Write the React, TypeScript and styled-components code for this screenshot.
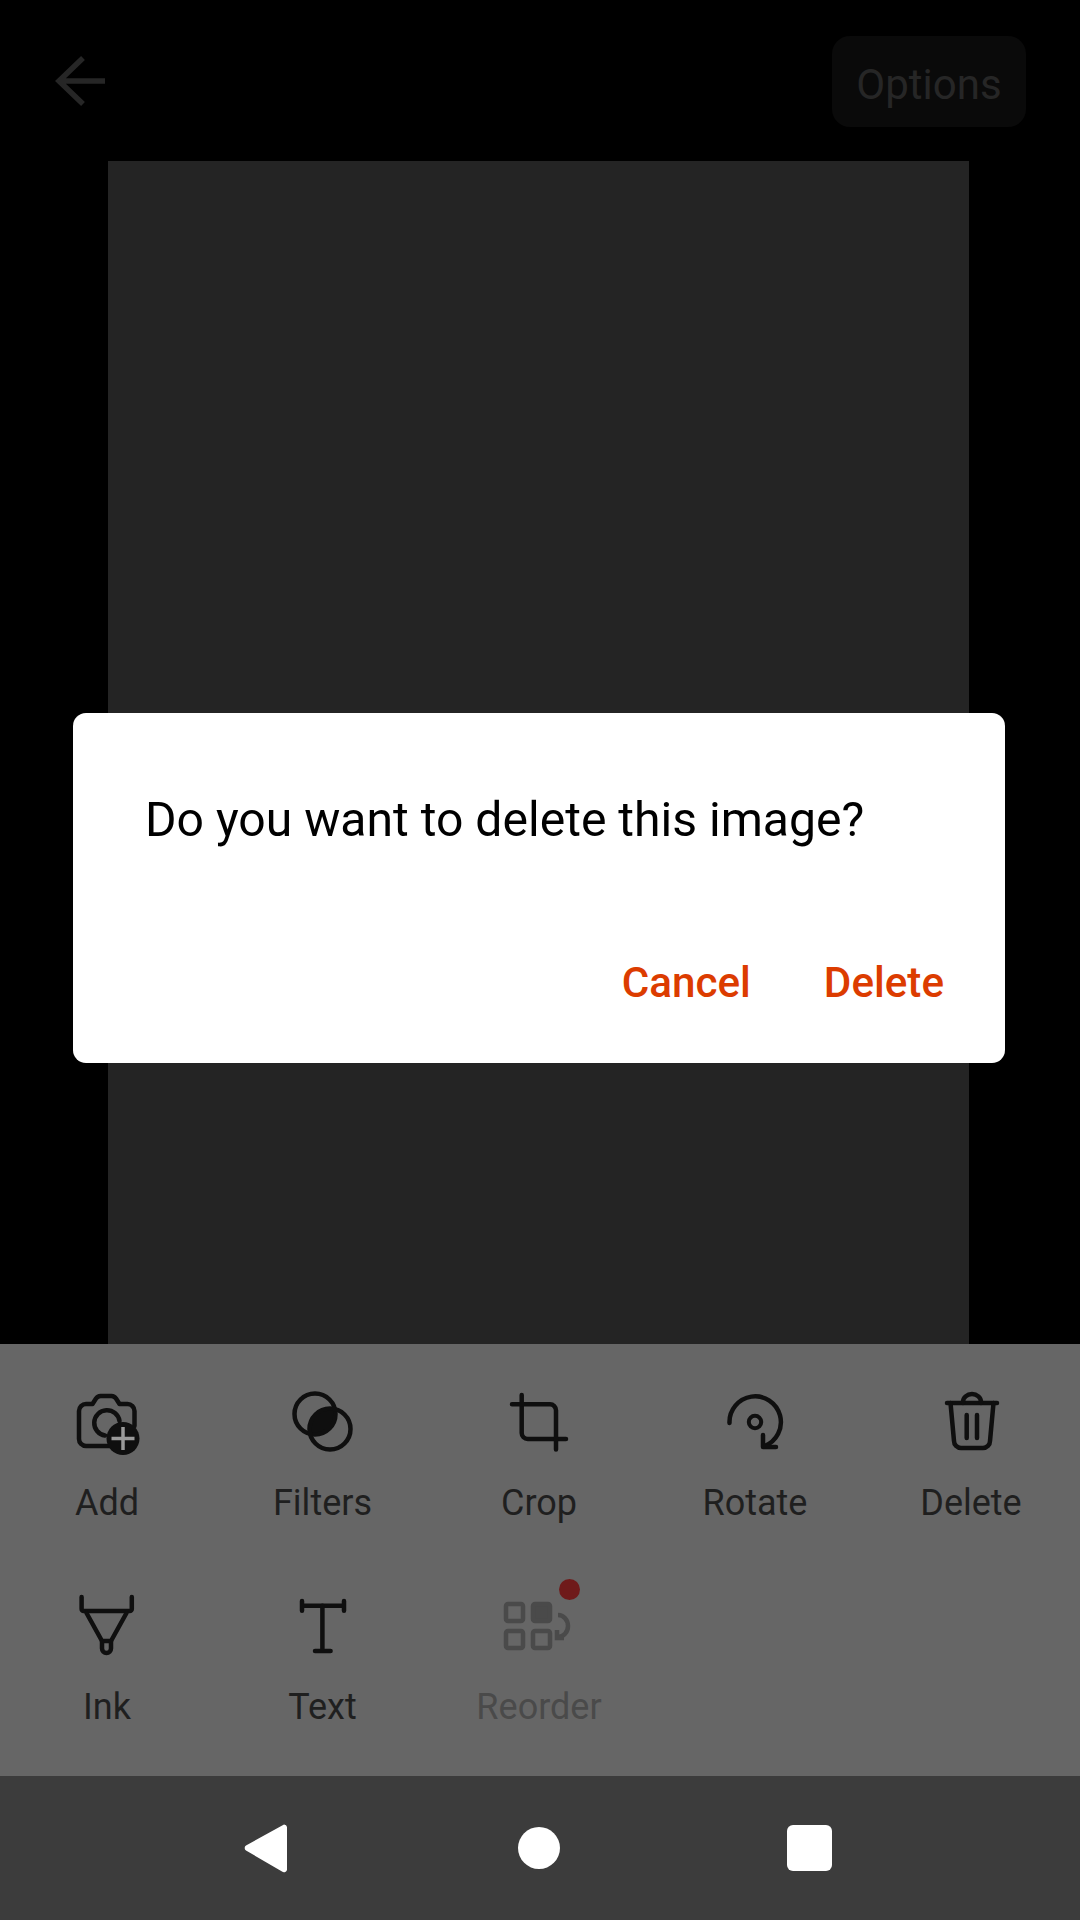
import React from 'react';
import styled, { createGlobalStyle } from 'styled-components';

const GlobalStyle = createGlobalStyle`
  html, body {
    margin: 0;
    padding: 0;
    background: #000;
  }
  * {
    box-sizing: border-box;
  }
`;

const Screen = styled.div`
  position: relative;
  display: flex;
  flex-direction: column;
  width: 1080px;
  height: 1920px;
  overflow: hidden;
  background: #000;
  font-family: Roboto, 'Liberation Sans', sans-serif;
`;

const Header = styled.header`
  display: flex;
  align-items: center;
  justify-content: space-between;
  height: 161px;
  padding: 0 54px 0 47px;
  flex: none;
`;

const BackIcon = styled.svg`
  width: 72px;
  height: 72px;
  fill: none;
  stroke: #262626;
  stroke-width: 5.5;
`;

const OptionsButton = styled.div`
  display: flex;
  align-items: center;
  justify-content: center;
  width: 194px;
  height: 91px;
  margin-top: 1px;
  padding-top: 7px;
  border-radius: 18px;
  background: #0a0a0a;
  color: #262626;
  font-size: 42px;
`;

const PageArea = styled.main`
  flex: 1;
  margin: 0 111px 0 108px;
  background: #242424;
`;

const ToolPanel = styled.section`
  display: grid;
  grid-template-columns: 214px 217px repeat(3, 216px);
  grid-auto-rows: 204px;
  flex: none;
  height: 432px;
  padding-top: 42px;
  background: #666;
`;

const Tool = styled.div<{ $disabled?: boolean }>`
  display: flex;
  flex-direction: column;
  align-items: center;
  color: ${p => (p.$disabled ? '#4a4a4a' : '#1f1f1f')};
`;

const IconBox = styled.div`
  position: relative;
  width: 72px;
  height: 72px;
`;

const ToolIcon = styled.svg`
  display: block;
  width: 72px;
  height: 72px;
  fill: none;
  stroke: currentColor;
  stroke-width: 4.5;
  stroke-linecap: round;
  stroke-linejoin: round;
`;

const ToolIconTint = styled.span<{ $disabled?: boolean }>`
  display: block;
  color: ${p => (p.$disabled ? '#4a4a4a' : '#0f0f0f')};
`;

const Dot = styled.span`
  position: absolute;
  top: -11px;
  left: 56px;
  width: 21px;
  height: 21px;
  border-radius: 50%;
  background: #6f1a1a;
`;

const ToolLabel = styled.span`
  margin-top: 24px;
  font-size: 36px;
  line-height: 42px;
`;

const NavBar = styled.nav`
  display: grid;
  grid-template-columns: 274px 269px 45px;
  align-items: center;
  flex: none;
  height: 144px;
  padding-left: 244px;
  background: #3c3c3c;
`;

const NavBack = styled.svg`
  display: block;
  width: 43px;
  height: 50px;
  fill: #fff;
`;

const NavHome = styled.span`
  width: 42px;
  height: 42px;
  border-radius: 50%;
  background: #fff;
`;

const NavRecents = styled.span`
  width: 45px;
  height: 46px;
  border-radius: 6px;
  background: #fff;
`;

const Dialog = styled.div`
  position: absolute;
  top: 713px;
  left: 73px;
  display: flex;
  flex-direction: column;
  width: 932px;
  height: 350px;
  padding: 77px 61px 0 72px;
  border-radius: 13px;
  background: #fff;
`;

const DialogMessage = styled.p`
  flex: 1;
  margin: 0;
  color: #000;
  font-size: 48.1px;
  line-height: 60px;
`;

const DialogActions = styled.div`
  display: flex;
  justify-content: flex-end;
  gap: 73px;
  padding-bottom: 55px;
`;

const DialogAction = styled.span`
  color: #dc3c00;
  font-size: 42.2px;
  font-weight: 500;
  line-height: 50px;
`;

const AddIcon = () => (
  <ToolIcon viewBox="0 0 72 72">
    <path d="M50 60H15a7 7 0 0 1-7-7V25a7 7 0 0 1 7-7h6.5l3.5-5.5a6 6 0 0 1 4.5-2.5h11a6 6 0 0 1 4.5 2.5l3.5 5.5H56.5a7 7 0 0 1 7 7V40" />
    <path d="M34 49.5A12.7 12.7 0 1 1 48.5 35" />
    <circle cx="52" cy="52.5" r="16.5" fill="#0f0f0f" stroke="none" />
    <path d="M52 41v23M40.5 52.5h23" stroke="#999" strokeWidth="3.5" strokeLinecap="butt" />
  </ToolIcon>
);

const FiltersIcon = () => (
  <ToolIcon viewBox="0 0 72 72">
    <path d="M47.9 23.1A20.5 20.5 0 0 1 23.1 47.9A20.5 20.5 0 0 1 47.9 23.1Z" fill="#0f0f0f" stroke="none" />
    <circle cx="28" cy="28" r="20.5" />
    <circle cx="43" cy="43" r="20.5" />
  </ToolIcon>
);

const CropIcon = () => (
  <ToolIcon viewBox="0 0 72 72">
    <path d="M18.7 9V47a6 6 0 0 0 6 6H63" />
    <path d="M9 18.3H47a6 6 0 0 1 6 6V63.5" />
  </ToolIcon>
);

const RotateIcon = () => (
  <ToolIcon viewBox="0 0 72 72">
    <path d="M10.5 37A25.7 25.7 0 1 1 45.5 60" />
    <path d="M44 49V61H57" />
    <circle cx="36" cy="36" r="6.2" strokeWidth="4" />
  </ToolIcon>
);

const TrashIcon = () => (
  <ToolIcon viewBox="0 0 72 72">
    <path d="M12 17H62" />
    <path d="M28 17v-1a9 8 0 0 1 18 0v1" />
    <path d="M15.5 17L19 55a7 7 0 0 0 7 7H48a7 7 0 0 0 7-7L58.5 17" />
    <path d="M31.7 29V52M42 29V52" />
  </ToolIcon>
);

const InkIcon = () => (
  <ToolIcon viewBox="0 0 72 72" strokeWidth="4">
    <path d="M10.6 7V19a2 2 0 0 0 2 2H58.8a2 2 0 0 0 2-2V7" />
    <path d="M15.5 23L31 51H40L55.5 23" />
    <path d="M31 51V58.5a4.5 4.5 0 0 0 9 0V51" />
  </ToolIcon>
);

const TextIcon = () => (
  <ToolIcon viewBox="0 0 72 72">
    <path d="M15 11V20.7M57 11V20.7M15 15.7H57" />
    <path d="M35.4 15.7V61M28 61H43.6" />
  </ToolIcon>
);

const ReorderIcon = () => (
  <ToolIcon viewBox="0 0 72 72" strokeWidth="4">
    <rect x="3" y="14" width="17" height="17" rx="2" />
    <rect x="30" y="14" width="17" height="17" rx="2" fill="currentColor" />
    <rect x="3" y="41" width="17" height="17" rx="2" />
    <rect x="30" y="41" width="17" height="17" rx="2" />
    <path d="M55 25a10 11 0 0 1 0 22" strokeLinecap="butt" />
    <path d="M54 40V48H61" strokeLinecap="butt" strokeLinejoin="miter" />
  </ToolIcon>
);

const tools = [
  { label: 'Add', icon: <AddIcon /> },
  { label: 'Filters', icon: <FiltersIcon /> },
  { label: 'Crop', icon: <CropIcon /> },
  { label: 'Rotate', icon: <RotateIcon /> },
  { label: 'Delete', icon: <TrashIcon /> },
  { label: 'Ink', icon: <InkIcon /> },
  { label: 'Text', icon: <TextIcon /> },
  { label: 'Reorder', icon: <ReorderIcon />, disabled: true, dot: true },
];

export default function App() {
  return (
    <Screen>
      <GlobalStyle />
      {/* Top bar */}
      <Header>
        <BackIcon viewBox="0 0 72 72">
          <path d="M36 13L12 36L36 59M12 36H58" />
        </BackIcon>
        <OptionsButton>Options</OptionsButton>
      </Header>

      {/* Scanned page */}
      <PageArea />

      {/* Tools */}
      <ToolPanel>
        {tools.map(tool => (
          <Tool key={tool.label} $disabled={tool.disabled}>
            <IconBox>
              <ToolIconTint $disabled={tool.disabled}>{tool.icon}</ToolIconTint>
              {tool.dot && <Dot />}
            </IconBox>
            <ToolLabel>{tool.label}</ToolLabel>
          </Tool>
        ))}
      </ToolPanel>

      {/* Android navigation */}
      <NavBar>
        <NavBack viewBox="0 0 43 50">
          <path d="M40 1.5L2 22.5a3 3 0 0 0 0 5L38 48.5a3 3 0 0 0 5-2.5V4a3 3 0 0 0-3-2.5Z" />
        </NavBack>
        <NavHome />
        <NavRecents />
      </NavBar>

      {/* Delete confirmation */}
      <Dialog>
        <DialogMessage>Do you want to delete this image?</DialogMessage>
        <DialogActions>
          <DialogAction>Cancel</DialogAction>
          <DialogAction>Delete</DialogAction>
        </DialogActions>
      </Dialog>
    </Screen>
  );
}
